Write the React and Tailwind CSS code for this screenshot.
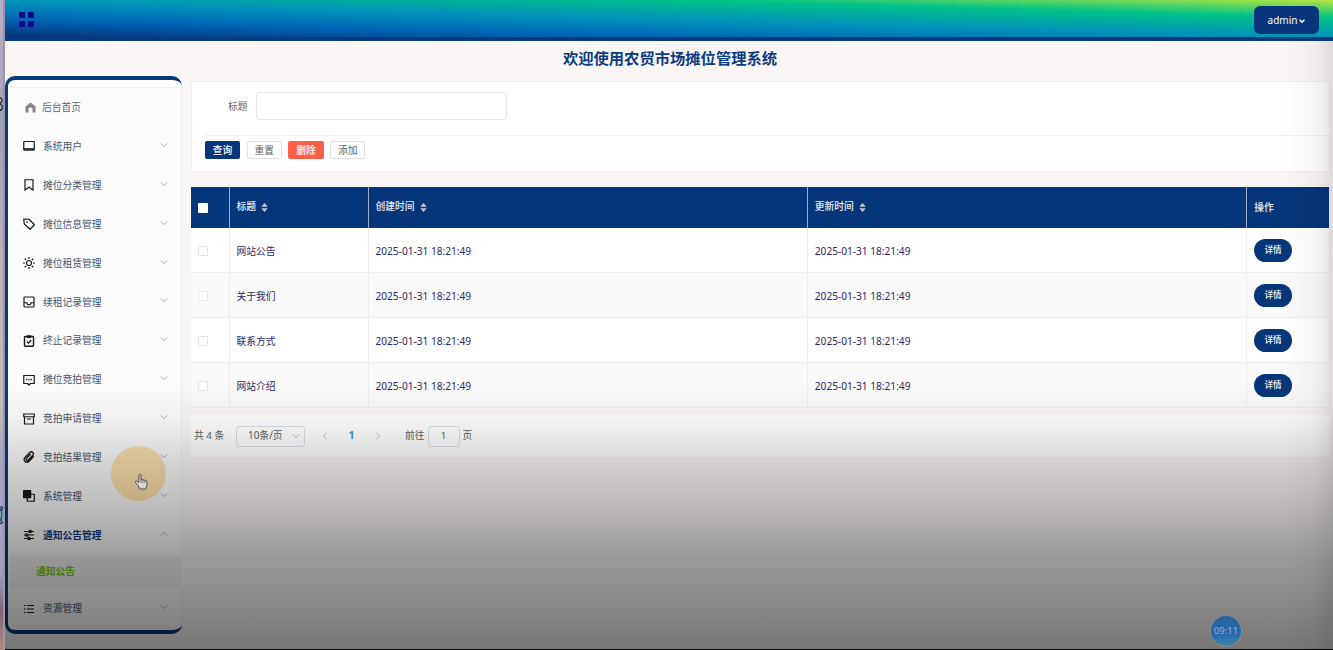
import React, { useState } from 'react';

const stroke = { fill: 'none', stroke: 'currentColor', strokeWidth: 2.4 };

const icons = {
  monitor: (
    <>
      <rect x="1.5" y="3" width="21" height="17" rx="1" {...stroke} />
      <path d="M1.5 16h21v5h-21z" fill="currentColor" opacity="0.8" />
    </>
  ),
  bookmark: <path d="M4 1.500h16v20.500L12 16.500l-8 5.500z" {...stroke} />,
  tag: (
    <>
      <path d="M1.500 2L12 2.500l11 11-9 9L2.500 12z" {...stroke} strokeLinejoin="round" />
      <circle cx="8" cy="8" r="1.700" fill="currentColor" />
    </>
  ),
  sun: (
    <>
      <circle cx="12" cy="12" r="5" {...stroke} />
      <path d="M12 0v4M12 20v4M0 12h4M20 12h4M3.500 3.500l2.800 2.800M17.700 17.700l2.800 2.800M3.500 20.500l2.800-2.800M17.700 6.300l2.800-2.800" {...stroke} />
    </>
  ),
  inbox: (
    <>
      <rect x="2" y="2" width="20" height="20" rx="1.500" {...stroke} />
      <path d="M2 13.500h6c0 2.500 1.500 4 4 4s4-1.500 4-4h6" {...stroke} />
    </>
  ),
  clipboard: (
    <>
      <rect x="3" y="3" width="18" height="19.500" rx="1.500" {...stroke} strokeWidth={2.8} />
      <path d="M7.500 0.500h9v5.500h-9z" fill="currentColor" />
      <path d="M8 13l3 3 5.500-5.500" {...stroke} strokeWidth={2.6} />
    </>
  ),
  message: (
    <>
      <path d="M1.500 3h21v16h-7.500L12 22 9 19H1.500z" {...stroke} strokeLinejoin="round" />
      <path d="M6.200 9.700h2.600v2.600H6.200zM10.700 9.700h2.600v2.600h-2.600zM15.200 9.700h2.600v2.600h-2.600z" fill="currentColor" />
    </>
  ),
  archive: <path d="M1.500 2h21v5.500h-21zM3 7.500h18v14.500H3zM8 12h8" {...stroke} />,
  clip: (
    <path
      d="M21.500 10.500l-9.500 10c-2 2-5.500 2.500-8 .3-2.500-2.200-2.300-5.500 0-7.800L13.500 3c1.700-1.700 4.500-1.700 6.200 0s1.700 4 0 5.700l-9 9.300c-1 1-2.700 1-3.700.2-1-1-1-2.500 0-3.500l8.500-8.500"
      {...stroke}
      strokeWidth={2.7}
    />
  ),
  copy: (
    <>
      <rect x="0" y="0" width="16.500" height="16.500" rx="1.500" fill="currentColor" />
      <path d="M16 8.500h6.500V22.500H8.500V16" {...stroke} />
    </>
  ),
  sliders: (
    <>
      <path d="M2 5h20M2 12h20M2 19h20" {...stroke} />
      <circle cx="14.500" cy="5" r="2.500" {...stroke} />
      <circle cx="7.500" cy="12" r="2.500" {...stroke} />
      <circle cx="12" cy="19" r="2.500" {...stroke} />
    </>
  ),
  list: <path d="M2 5h3M8 5h14M2 12h3M8 12h14M2 19h3M8 19h14" {...stroke} strokeWidth={2.4} />,
};

const menus = [
  { icon: 'monitor', label: '系统用户' },
  { icon: 'bookmark', label: '摊位分类管理' },
  { icon: 'tag', label: '摊位信息管理' },
  { icon: 'sun', label: '摊位租赁管理' },
  { icon: 'inbox', label: '续租记录管理' },
  { icon: 'clipboard', label: '终止记录管理' },
  { icon: 'message', label: '摊位竞拍管理' },
  { icon: 'archive', label: '竞拍申请管理' },
  { icon: 'clip', label: '竞拍结果管理' },
  { icon: 'copy', label: '系统管理' },
  { icon: 'sliders', label: '通知公告管理', children: ['通知公告'] },
  { icon: 'list', label: '资源管理' },
];

const rows = ['网站公告', '关于我们', '联系方式', '网站介绍'].map((title) => ({
  title,
  created: '2025-01-31 18:21:49',
  updated: '2025-01-31 18:21:49',
}));

const Chevron = ({ className, d = 'M1 3l4 4 4-4' }) => (
  <svg className={className} viewBox="0 0 10 10" fill="none" stroke="currentColor" strokeWidth="1.2">
    <path d={d} />
  </svg>
);

const SortIcon = () => (
  <svg className="w-[7px] h-[9px] ml-[5px] text-[#c3cad8]" viewBox="0 0 7 9" fill="currentColor">
    <path d="M3.500 0L6.700 3.700H.3zM3.500 9L.3 5.300h6.400z" />
  </svg>
);

const Sidebar = () => {
  const [opened, setOpened] = useState('通知公告管理');

  return (
    <aside className="w-[177px] h-[558px] shrink-0 mt-[-5px] border-l-[3px] border-y-[4px] border-[#073a7d] rounded-[10px] bg-white pl-px pt-[7px] overflow-hidden">
      <div className="h-[542px] bg-[#fbfbfb] border-t border-r border-[#f0f0f0]">
        <div className="flex items-center h-[38.9px] pl-[16px] text-[#5d6880]">
          <svg className="w-[11px] h-[11px] mr-[6px] text-[#85878d]" viewBox="0 0 22 22" fill="currentColor">
            <path d="M11 1L1 9v12h6v-7c0-4 8-4 8 0v7h6V9z" />
          </svg>
          后台首页
        </div>
        {menus.map((menu) => {
          const isOpen = opened === menu.label && menu.children;
          return (
            <div key={menu.label}>
              <div
                onClick={() => setOpened(menu.label)}
                className={`flex items-center h-[38.9px] pl-[14px] pr-[13px] cursor-pointer ${
                  isOpen ? 'text-[#0b3a85] font-bold' : 'text-[#46546f]'
                }`}
              >
                <svg className="w-[12px] h-[12px] mr-[8px] text-[#17191c]" viewBox="0 0 24 24">
                  {icons[menu.icon]}
                </svg>
                <span className="flex-1 pt-px">{menu.label}</span>
                <Chevron
                  className="w-[8px] h-[8px] mb-[3px] text-[#a9acb3]"
                  d={isOpen ? 'M1 7l4-4 4 4' : 'M1 3l4 4 4-4'}
                />
              </div>
              {isOpen &&
                menu.children.map((child) => (
                  <div key={child} className="flex items-center h-[34.4px] pl-[27px] bg-[#f1f1f1] text-[#76c60e] font-bold">
                    {child}
                  </div>
                ))}
            </div>
          );
        })}
      </div>
    </aside>
  );
};

const SearchPanel = () => (
  <section className="h-[91px] bg-white border border-[#eeeeef] pl-[13px] pt-[10px]">
    <div className="flex items-center h-[28px] pl-[23px] text-[#66696e]">
      <span className="w-[27.500px] pt-px">标题</span>
      <input className="w-[251px] h-[28px] border border-[#e5e6e9] rounded-[3px] bg-white outline-none" />
    </div>
    <div className="flex gap-[6.500px] mt-[15px] pt-[5px] border-t border-[#efeff1]">
      <button className="w-[35.200px] h-[18px] pt-px rounded-[2px] bg-[#06367a] text-white font-medium">查询</button>
      <button className="w-[35.200px] h-[18px] pt-px rounded-[2px] border border-[#dedfe3] text-[#606266]">重置</button>
      <button className="w-[35.200px] h-[18px] pt-px rounded-[2px] bg-[#fb5f48] text-white font-medium">删除</button>
      <button className="w-[35.200px] h-[18px] pt-px rounded-[2px] border border-[#dedfe3] text-[#606266]">添加</button>
    </div>
  </section>
);

const columns = 'grid grid-cols-[38.500px_139px_439.300px_439.500px_1fr]';

const NoticeTable = () => (
  <section className="mt-[15px] border-r border-[#eceef4]">
    <div className={`${columns} h-[41px] bg-[#06367a] text-[#e9edf5] font-medium`}>
      <div className="flex items-center pl-[7px] border-r border-[#9aadc9]">
        <span className="w-[10px] h-[10px] mt-[1px] rounded-[1px] bg-white"></span>
      </div>
      <div className="flex items-center pl-[7px] pb-px border-r border-[#9aadc9]">标题<SortIcon /></div>
      <div className="flex items-center pl-[7px] pb-px border-r border-[#9aadc9]">创建时间<SortIcon /></div>
      <div className="flex items-center pl-[7px] pb-px border-r border-[#9aadc9]">更新时间<SortIcon /></div>
      <div className="flex items-center pl-[7px]">操作</div>
    </div>
    {rows.map((row, i) => (
      <div key={row.title} className={`${columns} h-[45px] text-[#2b2769] ${i % 2 ? 'bg-[#fafafa]' : 'bg-white'}`}>
        <div className="flex items-center pl-[7px] border-r border-b border-[#eceef4]">
          <span className="w-[10px] h-[10px] mt-[2px] rounded-[1px] border border-[#e3e5ea] bg-white"></span>
        </div>
        <div className="flex items-center pl-[7px] pt-[3px] border-r border-b border-[#eceef4]">{row.title}</div>
        <div className="flex items-center pl-[7px] pt-[2px] border-r border-b border-[#eceef4] text-[10.150px]">{row.created}</div>
        <div className="flex items-center pl-[7px] pt-[2px] border-r border-b border-[#eceef4] text-[10.150px]">{row.updated}</div>
        <div className="flex items-center pl-[7px] border-b border-[#eceef4]">
          <button className="w-[37.500px] h-[23px] pt-px rounded-full bg-[#06367a] text-white text-[8.600px] font-medium">详情</button>
        </div>
      </div>
    ))}
  </section>
);

const Pagination = () => (
  <section className="flex items-center h-[42px] mt-[7px] pl-[3px] bg-white text-[#606266]">
    <span className="w-[42px]">共 4 条</span>
    <div className="flex items-center justify-between w-[69px] h-[21px] pl-[11px] pr-[4px] border border-[#dcdfe6] rounded-[3px] text-[9.900px]">
      10条/页
      <Chevron className="w-[8px] h-[8px] text-[#b6bac2]" />
    </div>
    <Chevron className="w-[8px] h-[8px] ml-[16px] text-[#b2b5bb]" d="M7 1L3 5l4 4" />
    <span className="w-[45px] pb-[2px] text-center text-[10.500px] font-bold text-[#2f92f2]">1</span>
    <Chevron className="w-[8px] h-[8px] mr-[23px] text-[#b2b5bb]" d="M3 1l4 4-4 4" />
    前往
    <span className="flex items-center justify-center w-[32px] h-[21px] ml-[3px] mr-[3px] border border-[#dcdfe6] rounded-[3px]">1</span>
    页
  </section>
);

const App = () => {
  return (
    <div className="relative flex w-[1333px] h-[650px] overflow-hidden bg-[#faf6f5] font-['Noto_Sans','Noto_Sans_CJK_SC',sans-serif] text-[9.750px] leading-none">
      {/* Desktop edge behind the window */}
      <div className="relative w-[5px] shrink-0 overflow-hidden border-r-2 border-[#9c96a3] bg-[linear-gradient(#b7b0cb,#a69fba_20%,#bcb0bd_38%,#c6bab7_62%,#aaa5c5_70%,#a29fc0_88%,#806477_94%,#b3897b)]">
        <span className="absolute top-[94px] right-0 text-[20px] font-bold text-[#e9dfce] [-webkit-text-stroke:1.500px_#2a2730]">8</span>
        <span className="absolute top-[506px] right-0 text-[18px] font-bold text-[#7fd0f1] [-webkit-text-stroke:1px_#242a3b]">项</span>
      </div>

      <div className="flex-1 min-w-0">
        <header className="flex items-center justify-between h-[41px] pl-[14px] pr-[14px] border-b-[4px] border-[#07397e] bg-[linear-gradient(to_top_right,#05317a,#0067b6_25%,#0095b9_50%,#00c387_76%,#b4e640)] bg-origin-padding">
          <div className="grid grid-cols-2 gap-[2.500px] mt-[2px]">
            <span className="w-[6.200px] h-[6.200px] bg-[#10098a]"></span>
            <span className="w-[6.200px] h-[6.200px] bg-[#10098a]"></span>
            <span className="w-[6.200px] h-[6.200px] bg-[#10098a]"></span>
            <span className="w-[6.200px] h-[6.200px] bg-[#10098a]"></span>
          </div>
          <button className="flex items-center justify-center w-[65px] h-[28px] mt-[3px] rounded-[6px] bg-[#06357b] text-[10px] text-white">
            admin
            <svg className="w-[6px] h-[6px] ml-[2px] mt-[2px]" viewBox="0 0 10 10" fill="none" stroke="currentColor" strokeWidth="2.500">
              <path d="M1 3l4 4 4-4" />
            </svg>
          </button>
        </header>

        <h1 className="flex items-center justify-center h-[40px] pl-[2px] pb-[4px] text-[15.300px] font-bold text-[#0b3c80]">欢迎使用农贸市场摊位管理系统</h1>

        <div className="flex">
          <Sidebar />
          <main className="w-[1139px] ml-[9px]">
            <SearchPanel />
            <NoticeTable />
            <Pagination />
          </main>
        </div>
      </div>

      {/* Shading over the lower and right side */}
      <div className="absolute inset-y-0 left-[5px] right-0 pointer-events-none bg-[linear-gradient(transparent_385px,rgba(0,0,0,0.04)_415px,rgba(0,0,0,0.15)_460px,rgba(0,0,0,0.25)_505px,rgba(0,0,0,0.38)_560px,rgba(0,0,0,0.52)_650px)]"></div>
      <div className="absolute top-[41px] bottom-0 right-0 w-[50px] pointer-events-none bg-[linear-gradient(to_right,transparent,rgba(0,0,0,0.03)_60%,rgba(0,0,0,0.11))]"></div>

      {/* Pointer highlight */}
      <div className="absolute left-[111px] top-[446px] w-[55px] h-[55px] rounded-full bg-[linear-gradient(#dec59a,#c4aa7c)] opacity-95"></div>
      <svg className="absolute left-[134px] top-[473px] w-[15px] h-[17px]" viewBox="0 0 15 17">
        <path
          d="M5 1.500c1-.8 2 0 2 1V7l1-.5 1 .5 1-.2 1 .7c1-.2 2 .3 2 1.500v3.500L11.500 16H6L4 12.500 1.500 9.500c-.6-1 .6-2 1.600-1.300L4.600 9.500z"
          fill="#d5d5d5"
          stroke="#4b4c50"
          strokeWidth="1"
        />
        <path d="M7 7v3M9 7.500V10M11 8v2" stroke="#4b4c50" strokeWidth="0.7" />
      </svg>

      {/* Clock bubble */}
      <div className="absolute left-[1211px] top-[616px] flex items-center justify-center w-[30px] h-[30px] rounded-full bg-[linear-gradient(#28649f,#2468ae_60%,#3b86aa)] ring-1 ring-[#8a8a88] text-[9.500px] text-[#9eb4cb]">
        09:11
      </div>
      <div className="absolute bottom-0 left-[5px] right-0 h-px bg-black"></div>
    </div>
  );
};

export default App;
